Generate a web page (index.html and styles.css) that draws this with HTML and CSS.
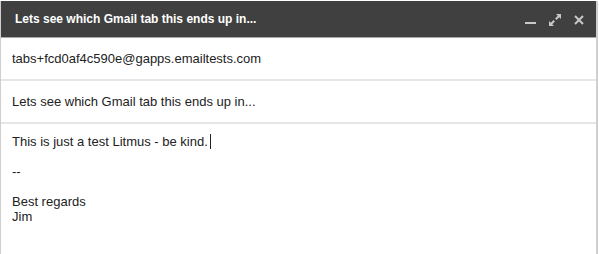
FILE: index.html
```html
<!DOCTYPE html>
<html>
<head>
<meta charset="utf-8">
<link rel="stylesheet" href="styles.css">
</head>
<body>
<div class="compose">
  <div class="titlebar">
    <span class="title">Lets see which Gmail tab this ends up in...</span>
    <div class="controls">
      <svg class="ic" width="12" height="12" viewBox="0 0 12 12"><rect x="0" y="8" width="11" height="2" fill="#c8c8c8"/></svg>
      <svg class="ic" width="12" height="12" viewBox="0 0 12 12"><path d="M7 0h5v5l-1.8-1.8-2.7 2.7-1.4-1.4 2.7-2.7z M5 12H0V7l1.8 1.8 2.7-2.7 1.4 1.4-2.7 2.7z" fill="#c8c8c8"/></svg>
      <svg class="ic" width="12" height="12" viewBox="0 0 12 12"><path d="M2 2L10 10M10 2L2 10" stroke="#c8c8c8" stroke-width="2"/></svg>
    </div>
  </div>
  <div class="field">tabs+fcd0af4c590e@gapps.emailtests.com</div>
  <div class="field">Lets see which Gmail tab this ends up in...</div>
  <div class="body">
    <div>This is just a test Litmus - be kind.<span class="caret"></span></div>
    <div>&nbsp;</div>
    <div>--</div>
    <div>&nbsp;</div>
    <div>Best regards</div>
    <div>Jim</div>
  </div>
</div>
</body>
</html>
```
FILE: styles.css
```css
html, body {
  margin: 0;
  padding: 0;
  background: #fff;
}
.compose {
  margin-top: 1px;
  width: 595px;
  height: 253px;
  border-left: 1px solid #cfcfcf;
  border-right: 2px solid #cfcfcf;
  font-family: "Liberation Sans", Arial, sans-serif;
  font-size: 13px;
  color: #222;
  box-sizing: content-box;
}
.titlebar {
  height: 36px;
  background: #404040;
  display: flex;
  align-items: center;
  justify-content: space-between;
  padding: 0 11px 0 14px;
  border-bottom: 1px solid #a8a8a8;
}
.title {
  color: #fff;
  font-weight: bold;
  font-size: 12px;
}
.controls {
  display: flex;
  align-items: center;
  gap: 12px;
  padding-top: 2px;
}
.ic {
  display: block;
}
.field {
  height: 41px;
  display: flex;
  align-items: center;
  padding-left: 11px;
  border-bottom: 2px solid #e6e6e6;
}
.body {
  padding: 10px 11px;
  line-height: 15px;
}
.caret {
  display: inline-block;
  width: 1px;
  height: 15px;
  background: #222;
  vertical-align: -3px;
  margin-left: 2px;
}
```
